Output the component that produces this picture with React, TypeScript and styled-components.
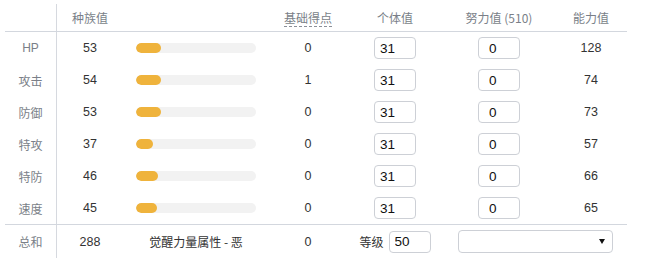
import styled, { createGlobalStyle } from 'styled-components';

const GlobalStyle = createGlobalStyle`
  body {
    margin: 0;
    background: #fff;
    font-family: 'Liberation Sans', 'Noto Sans CJK SC', sans-serif;
  }
`;

const COLS = '52px 66px 146px 78px 96px 112px 72px';

const Table = styled.div`
  margin: 4px 0 0 5px;
  width: 622px;
  font-size: 12px;
  color: #333;
`;

const Row = styled.div<{ $h: number; $line?: boolean }>`
  display: grid;
  grid-template-columns: ${COLS};
  height: ${(p) => p.$h}px;
  align-items: center;
  justify-items: center;
  border-bottom: ${(p) => (p.$line ? '1px solid #d3d7de' : 'none')};
`;

const Label = styled.div`
  align-self: stretch;
  justify-self: stretch;
  display: flex;
  align-items: center;
  justify-content: center;
  border-right: 1px solid #d6d9df;
  color: #7a7f88;
  font-family: 'Liberation Sans', 'Noto Sans CJK SC', sans-serif;
`;

const Head = styled.div<{ $dashed?: boolean }>`
  color: #7a7f88;
  font-family: 'Noto Sans CJK SC', sans-serif;
  line-height: 14px;
  padding-bottom: ${(p) => (p.$dashed ? '1px' : '0')};
  border-bottom: ${(p) => (p.$dashed ? '1px dashed #8a8f98' : 'none')};
  margin-top: ${(p) => (p.$dashed ? '2px' : '0')};
`;

const Num = styled.div`
  font-size: 12.5px;
  color: #333;
`;

const Track = styled.div`
  width: 120px;
  height: 10px;
  border-radius: 5px;
  background: #f2f2f2;
  overflow: hidden;
`;

const Fill = styled.div`
  height: 100%;
  border-radius: 5px;
  background: #efb33c;
`;

const Box = styled.input<{ $pad: number }>`
  box-sizing: border-box;
  width: 42px;
  height: 22px;
  border: 1px solid #cdd0d6;
  border-radius: 4px;
  padding: 0 0 0 ${(p) => p.$pad}px;
  font-family: 'Liberation Sans', sans-serif;
  font-size: 13.5px;
  color: #111;
  background: #fff;
  outline: none;
`;

const Hidden = styled.div`
  font-family: 'Noto Sans CJK SC', sans-serif;
  color: #333;
`;

const Level = styled.div`
  display: flex;
  align-items: center;
  gap: 5px;
  font-family: 'Noto Sans CJK SC', sans-serif;
  color: #333;
`;

const Select = styled.div`
  grid-column: span 2;
  box-sizing: border-box;
  width: 155px;
  height: 23px;
  border: 1px solid #cdd0d6;
  border-radius: 4px;
  display: flex;
  align-items: center;
  justify-content: flex-end;
  padding-right: 7px;
  &::after {
    content: '';
    border-left: 3px solid transparent;
    border-right: 3px solid transparent;
    border-top: 5px solid #111;
  }
`;

const stats = [
  { name: 'HP', base: 53, ev: 0, total: 128 },
  { name: '攻击', base: 54, ev: 1, total: 74 },
  { name: '防御', base: 53, ev: 0, total: 73 },
  { name: '特攻', base: 37, ev: 0, total: 57 },
  { name: '特防', base: 46, ev: 0, total: 66 },
  { name: '速度', base: 45, ev: 0, total: 65 },
];

export default function App() {
  return (
    <>
      <GlobalStyle />
      <Table>
        <Row $h={27} $line>
          <Label />
          <Head>种族值</Head>
          <div />
          <Head $dashed>基础得点</Head>
          <Head>个体值</Head>
          <Head>努力值 (510)</Head>
          <Head>能力值</Head>
        </Row>
        {stats.map((s, i) => (
          <Row key={s.name} $h={32} $line={i === stats.length - 1}>
            <Label>{s.name}</Label>
            <Num>{s.base}</Num>
            <Track>
              <Fill style={{ width: `${(s.base / 255) * 120}px` }} />
            </Track>
            <Num>{s.ev}</Num>
            <Box $pad={5} defaultValue="31" />
            <Box $pad={10} defaultValue="0" />
            <Num>{s.total}</Num>
          </Row>
        ))}
        <Row $h={33}>
          <Label>总和</Label>
          <Num>288</Num>
          <Hidden>觉醒力量属性 - 恶</Hidden>
          <Num>0</Num>
          <Level>
            等级
            <Box $pad={5} defaultValue="50" />
          </Level>
          <Select />
        </Row>
      </Table>
    </>
  );
}
